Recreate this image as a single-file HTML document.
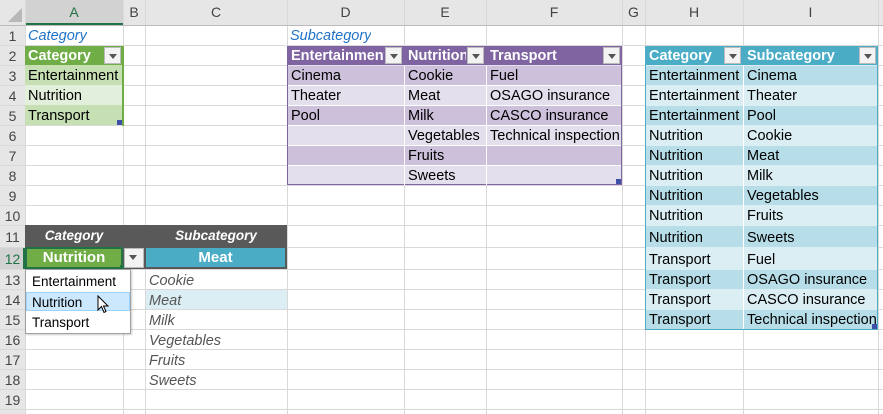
<!DOCTYPE html>
<html><head><meta charset="utf-8"><style>
*{margin:0;padding:0;box-sizing:border-box}
body{width:883px;height:414px;overflow:hidden;background:#fff;font-family:"Liberation Sans",sans-serif;font-size:14.5px;color:#000;position:relative}
div{position:absolute}
.v{width:1px;background:#d9d9d9;top:0;height:414px}
.h{height:1px;background:#d9d9d9;left:0;width:883px}
.hd{background:#e6e6e6;color:#444;text-align:center;font-size:14px}
.t{padding-left:3px;padding-top:1px;white-space:nowrap;overflow:hidden;line-height:20px}
.g1{background:#c6e0b4}.g2{background:#e2efda}
.p1{background:#ccc0da}.p2{background:#e4dfec}
.b1{background:#b7dee8}.b2{background:#daeef3}
.w{font-weight:bold;color:#fff}
.fb{width:17px;height:17px;background:#f3f3f3;border:1px solid #bbb;top:1px}
.fb:after{content:"";position:absolute;left:4px;top:6px;border-left:4px solid transparent;border-right:4px solid transparent;border-top:5px solid #555}
.it{font-style:italic;color:#555}
.bl{color:#1f73c7;font-style:italic}
</style></head><body>
<div class="hd" style="left:0;top:0;width:883px;height:25px"></div>
<div style="left:0;top:0;width:25px;height:414px;background:#e6e6e6"></div>
<div style="left:25px;top:0;width:98px;height:25px;background:#d2d2d2;border-bottom:2px solid #217346"></div>
<div style="left:0;top:247px;width:25px;height:22px;background:#d2d2d2;border-right:2px solid #217346"></div>
<div style="left:8px;top:8px;border-left:14px solid transparent;border-bottom:14px solid #b8b8b8;width:0;height:0"></div>
<div class="v" style="left:25px"></div><div class="v" style="left:123px"></div><div class="v" style="left:145px"></div><div class="v" style="left:287px"></div><div class="v" style="left:404px"></div><div class="v" style="left:486px"></div><div class="v" style="left:622px"></div><div class="v" style="left:645px"></div><div class="v" style="left:743px"></div><div class="v" style="left:878px"></div>
<div class="h" style="top:25px;background:#bbb"></div><div class="h" style="top:45px"></div><div class="h" style="top:65px"></div><div class="h" style="top:85px"></div><div class="h" style="top:105px"></div><div class="h" style="top:125px"></div><div class="h" style="top:145px"></div><div class="h" style="top:165px"></div><div class="h" style="top:185px"></div><div class="h" style="top:205px"></div><div class="h" style="top:225px"></div><div class="h" style="top:247px"></div><div class="h" style="top:269px"></div><div class="h" style="top:289px"></div><div class="h" style="top:309px"></div><div class="h" style="top:329px"></div><div class="h" style="top:349px"></div><div class="h" style="top:369px"></div><div class="h" style="top:389px"></div><div class="h" style="top:409px"></div>
<div style="left:25px;top:4px;width:98px;text-align:center;color:#217346;font-size:14px">A</div>
<div style="left:123px;top:4px;width:22px;text-align:center;color:#444;font-size:14px">B</div>
<div style="left:145px;top:4px;width:142px;text-align:center;color:#444;font-size:14px">C</div>
<div style="left:287px;top:4px;width:117px;text-align:center;color:#444;font-size:14px">D</div>
<div style="left:404px;top:4px;width:82px;text-align:center;color:#444;font-size:14px">E</div>
<div style="left:486px;top:4px;width:136px;text-align:center;color:#444;font-size:14px">F</div>
<div style="left:622px;top:4px;width:23px;text-align:center;color:#444;font-size:14px">G</div>
<div style="left:645px;top:4px;width:98px;text-align:center;color:#444;font-size:14px">H</div>
<div style="left:743px;top:4px;width:135px;text-align:center;color:#444;font-size:14px">I</div>
<div style="left:0;top:26px;width:25px;text-align:center;color:#444;font-size:14px;line-height:20px">1<br>2<br>3<br>4<br>5<br>6<br>7<br>8<br>9<br>10</div>
<div style="left:0;top:226px;width:25px;text-align:center;color:#444;font-size:14px;line-height:22px">11</div>
<div style="left:0;top:248px;width:25px;text-align:center;color:#217346;font-size:14px;line-height:22px">12</div>
<div style="left:0;top:270px;width:25px;text-align:center;color:#444;font-size:14px;line-height:20px">13<br>14<br>15<br>16<br>17<br>18<br>19</div>

<div class="t bl" style="left:25px;top:25px">Category</div>
<div class="t w" style="left:25px;top:46px;width:98px;height:19px;background:#70ad47;padding-top:0">Category</div>
<div class="fb" style="left:104px;top:47px"></div>
<div class="t g1" style="left:25px;top:65px;width:98px;height:20px">Entertainment</div>
<div class="t g2" style="left:25px;top:85px;width:98px;height:20px">Nutrition</div>
<div class="t g1" style="left:25px;top:105px;width:98px;height:20px">Transport</div>
<div style="left:122px;top:46px;width:2px;height:80px;background:#70ad47"></div>
<div style="left:117px;top:120px;width:5px;height:5px;background:#3f4fa8"></div>

<div class="t bl" style="left:287px;top:25px">Subcategory</div>
<div style="left:287px;top:46px;width:335px;height:139px;background:#e4dfec;border-left:1px solid #8064a2;border-right:1px solid #8064a2;border-bottom:1px solid #8064a2"></div>
<div style="left:287px;top:46px;width:335px;height:19px;background:#8064a2"></div>
<div class="t w" style="left:288px;top:46px;width:96px;height:19px;padding-top:0">Entertainment</div><div class="fb" style="left:385px;top:47px"></div>
<div class="t w" style="left:405px;top:46px;width:61px;height:19px;padding-top:0">Nutrition</div><div class="fb" style="left:467px;top:47px"></div>
<div class="t w" style="left:487px;top:46px;width:110px;height:19px;padding-top:0">Transport</div><div class="fb" style="left:603px;top:47px"></div>
<div class="p1" style="left:288px;top:66px;width:333px;height:19px"></div>
<div class="p1" style="left:288px;top:106px;width:333px;height:19px"></div>
<div class="p1" style="left:288px;top:146px;width:333px;height:19px"></div>
<div style="left:404px;top:66px;width:1px;height:119px;background:#fff"></div>
<div style="left:486px;top:66px;width:1px;height:119px;background:#fff"></div>
<div style="left:288px;top:85px;width:333px;height:1px;background:#fff"></div><div style="left:288px;top:105px;width:333px;height:1px;background:#fff"></div><div style="left:288px;top:125px;width:333px;height:1px;background:#fff"></div><div style="left:288px;top:145px;width:333px;height:1px;background:#fff"></div><div style="left:288px;top:165px;width:333px;height:1px;background:#fff"></div>
<div class="t" style="left:288px;top:65px;height:62px">Cinema<br>Theater<br>Pool</div>
<div class="t" style="left:405px;top:65px;height:122px">Cookie<br>Meat<br>Milk<br>Vegetables<br>Fruits<br>Sweets</div>
<div class="t" style="left:487px;top:65px;height:82px;width:135px">Fuel<br>OSAGO insurance<br>CASCO insurance<br>Technical inspection</div>
<div style="left:616px;top:179px;width:5px;height:5px;background:#3f4fa8"></div>

<div style="left:645px;top:46px;width:233px;height:284px;border:1px solid #4bacc6;border-top:none;background:#daeef3"></div>
<div style="left:645px;top:46px;width:233px;height:19px;background:#4bacc6"></div>
<div class="t w" style="left:646px;top:46px;padding-top:0">Category</div><div class="fb" style="left:724px;top:47px"></div>
<div class="t w" style="left:744px;top:46px;padding-top:0">Subcategory</div><div class="fb" style="left:859px;top:47px"></div>
<div class="b1" style="left:646px;top:66px;width:231px;height:19px"></div>
<div class="b1" style="left:646px;top:106px;width:231px;height:19px"></div>
<div class="b1" style="left:646px;top:146px;width:231px;height:19px"></div>
<div class="b1" style="left:646px;top:186px;width:231px;height:19px"></div>
<div class="b1" style="left:646px;top:226px;width:231px;height:21px"></div>
<div class="b1" style="left:646px;top:270px;width:231px;height:19px"></div>
<div class="b1" style="left:646px;top:310px;width:231px;height:19px"></div>
<div style="left:743px;top:66px;width:1px;height:263px;background:#fff"></div>
<div class="t" style="left:646px;top:65px;height:162px;width:97px">Entertainment<br>Entertainment<br>Entertainment<br>Nutrition<br>Nutrition<br>Nutrition<br>Nutrition<br>Nutrition</div>
<div class="t" style="left:744px;top:65px;height:162px;width:134px">Cinema<br>Theater<br>Pool<br>Cookie<br>Meat<br>Milk<br>Vegetables<br>Fruits</div>
<div class="t" style="left:646px;top:226px;line-height:22px;height:46px">Nutrition<br>Transport</div>
<div class="t" style="left:744px;top:226px;line-height:22px;height:46px">Sweets<br>Fuel</div>
<div class="t" style="left:646px;top:269px;height:62px">Transport<br>Transport<br>Transport</div>
<div class="t" style="left:744px;top:269px;height:62px;width:134px">OSAGO insurance<br>CASCO insurance<br>Technical inspection</div>
<div style="left:872px;top:324px;width:5px;height:5px;background:#3f4fa8"></div>

<div style="left:25px;top:225px;width:262px;height:44px;background:#595959"></div>
<div class="w" style="left:25px;top:225px;width:98px;line-height:22px;text-align:center;font-style:italic;font-size:13.5px">Category</div>
<div class="w" style="left:145px;top:225px;width:142px;line-height:22px;text-align:center;font-style:italic;font-size:13.5px">Subcategory</div>
<div class="w" style="left:25px;top:247px;width:98px;height:22px;background:#70ad47;border:2px solid #217346;text-align:center;line-height:18px;font-size:15px">Nutrition</div>
<div class="fb" style="left:124px;top:248px;width:20px;height:20px"></div>
<div style="left:120px;top:265px;width:4px;height:4px;background:#217346"></div>
<div class="w" style="left:146px;top:248px;width:139px;height:19px;background:#4bacc6;text-align:center;line-height:19px;font-size:15px">Meat</div>
<div class="b2" style="left:146px;top:290px;width:141px;height:19px"></div>
<div class="t it" style="left:146px;top:270px;height:122px">Cookie<br>Meat<br>Milk<br>Vegetables<br>Fruits<br>Sweets</div>
<div style="left:25px;top:269px;width:106px;height:65px;background:#fff;border:1px solid #a0a0a0;box-shadow:1px 1px 2px rgba(0,0,0,.2)"></div>
<div style="left:26px;top:292px;width:104px;height:19px;background:#cce8ff;border:1px solid #99d1ff"></div>
<div style="left:32px;top:272px;font-size:13.5px;line-height:20.5px">Entertainment<br>Nutrition<br>Transport</div>
<svg style="position:absolute;left:97px;top:295px" width="14" height="20" viewBox="0 0 14 20"><path d="M1 1 L1 15 L4.5 11.5 L7 17.5 L9 16.5 L6.5 11 L11 11 Z" fill="#fff" stroke="#000" stroke-width="1"/></svg>
</body></html>
